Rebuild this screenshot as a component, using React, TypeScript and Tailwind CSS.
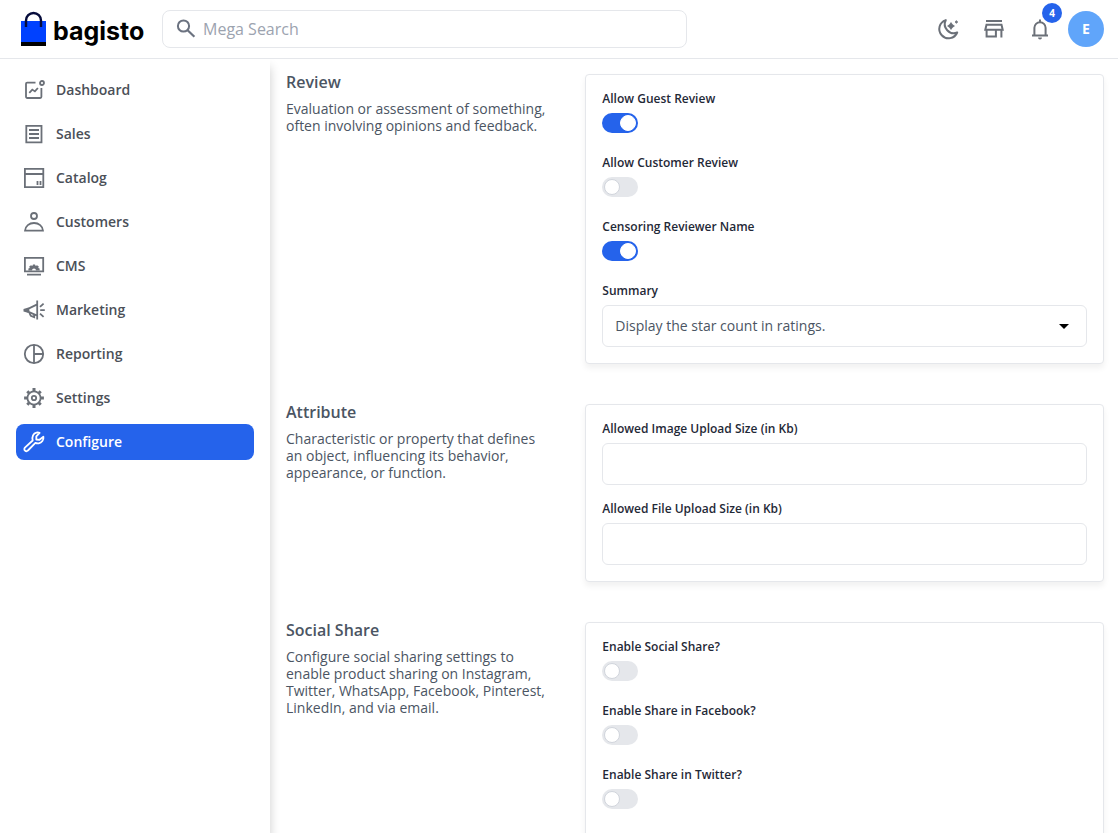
import { FC, ReactNode, useState } from 'react';
import clsx from 'clsx';

interface IconProps {
  children: ReactNode;
}

// 24px outline icon, inherits the text colour
const Icon: FC<IconProps> = ({ children }) => (
  <svg
    className="size-6 shrink-0"
    viewBox="0 0 24 24"
    fill="none"
    stroke="currentColor"
    strokeWidth={1.8}
    aria-hidden="true"
  >
    {children}
  </svg>
);

const DashboardIcon = () => (
  <Icon>
    <path d="M13.5 4.6H5.2A1.2 1.2 0 0 0 4 5.8v13A1.2 1.2 0 0 0 5.2 20h13a1.2 1.2 0 0 0 1.2-1.2V10" />
    <path d="m7.3 14.8 3-3.2 2.6 1.8 3-3.4" />
    <circle cx="20" cy="5" r="2" />
  </Icon>
);

const SalesIcon = () => (
  <Icon>
    <path d="M4.3 3.8h15.2v16.6H4.3zM7 8h10M7 12h10M7 16h10" />
  </Icon>
);

const CatalogIcon = () => (
  <Icon>
    <path d="M2.9 2.9h18.4v18.3H2.9zM3 8h18M15.5 15v4M18.5 15v4" />
  </Icon>
);

const CustomersIcon = () => (
  <Icon>
    <circle cx="12" cy="6" r="3" />
    <path d="M3 20.7h18c-.3-4.5-4.2-7.7-9-7.7s-8.7 3.2-9 7.7Z" />
  </Icon>
);

const CmsIcon = () => (
  <Icon>
    <path d="M2.9 3.9h18.3v13.5H2.9zM5 20.6h14" />
    <path
      d="M6.4 16.6v-2.2l1.4-.4-.6-1.600 1.800-1.200 1.300.8.700-1.600h2l.7 1.600 1.300-.8 1.800 1.200-.6 1.600 1.400.4v2.200h-3.600a2 2 0 0 0-4 0Z"
      fill="currentColor"
      stroke="none"
    />
  </Icon>
);

const MarketingIcon = () => (
  <Icon>
    <path d="M15.2 2.400v19M15.200 6.400 6.500 10.600v3.200l8.700 3.800" />
    <path d="M6.500 9.600 1.500 11v2.600l5 1.400z" fill="currentColor" stroke="none" />
    <path d="m7.400 14.800 1.400 3 3.400 1.400v-2.600M18 8.800l3.600-3.200M18.200 12.200h4.600M18 15.600l3.600 3.200" />
  </Icon>
);

const ReportingIcon = () => (
  <Icon>
    <circle cx="12" cy="12" r="9.2" />
    <path d="M12 2.800v18.400M12 12h9.200" />
  </Icon>
);

const SettingsIcon = () => (
  <Icon>
    <circle cx="12" cy="12" r="6.6" />
    <path
      d="M12 2.100v3.200M12 18.700v3.200M2.100 12h3.200M18.700 12h3.200M5.300 5.300l1.900 1.900M16.800 16.800l1.900 1.900M18.700 5.300l-1.900 1.900M7.200 16.800l-1.900 1.900"
      strokeWidth={3}
    />
    <circle cx="12" cy="12" r="2.200" />
  </Icon>
);

const WrenchIcon = () => (
  <Icon>
    <path
      d="m17.600 2.900-3.300 3.400v3.200l3.200.3 3.900-3c.5 3.200-1.700 6-4.600 6.500-1.200.2-2.400 0-3.400-.4l-7.500 7.600a2 2 0 0 1-3-2.800l7.800-7.200C9.700 6.500 11.300 3.200 14.500 2.600c1.100-.2 2.200-.1 3.100.3Z"
      strokeLinejoin="round"
    />
  </Icon>
);

const MoonIcon = () => (
  <Icon>
    <path
      d="M9.800 3.100a9.300 9.300 0 1 0 11.400 12.400A9 9 0 0 1 9.800 3.100Z"
      strokeWidth={2}
      strokeLinejoin="round"
    />
    <path
      d="m15 5.600 1.400 2L18.400 9l-2 1.400-1.400 2-1.400-2-2-1.400 2-1.400zM20.400 3.600l.4 1 1 .4-1 .4-.4 1-.4-1-1-.4 1-.4z"
      fill="currentColor"
      strokeWidth={0.8}
    />
  </Icon>
);

const StoreIcon = () => (
  <Icon>
    <path d="M4 4h16M4.500 7.800h15l1.200 5H3.300zM4.600 12.800v6.800h9.300v-6.800M19.400 12.800v7.600" strokeWidth={2} />
  </Icon>
);

const BellIcon = () => (
  <Icon>
    <path d="M4 18.600h16M6.400 18.500v-7.700a5.600 5.600 0 0 1 11.200 0v7.700M12 5V2.600" strokeWidth={2} />
    <path d="M10 20.500h4a2 2 0 0 1-4 0Z" fill="currentColor" stroke="none" />
  </Icon>
);

const SearchIcon = () => (
  <Icon>
    <circle cx="9.5" cy="9" r="5.6" strokeWidth={2} />
    <path d="m13.600 13.200 6.800 6.600" strokeWidth={2.2} />
  </Icon>
);

const menu = [
  { label: 'Dashboard', icon: DashboardIcon },
  { label: 'Sales', icon: SalesIcon },
  { label: 'Catalog', icon: CatalogIcon },
  { label: 'Customers', icon: CustomersIcon },
  { label: 'CMS', icon: CmsIcon },
  { label: 'Marketing', icon: MarketingIcon },
  { label: 'Reporting', icon: ReportingIcon },
  { label: 'Settings', icon: SettingsIcon },
  { label: 'Configure', icon: WrenchIcon, active: true },
];

const Header: FC = () => (
  <header className="z-20 flex shrink-0 items-center justify-between border-b border-gray-200 bg-white py-2.5 pr-3.5 pl-5">
    <div className="flex items-center">
      <a href="#" className="flex w-[142px] items-center gap-1.5" aria-label="bagisto home">
        <svg className="h-9 w-[27px]" viewBox="0 0 27 36" aria-hidden="true">
          <path d="M1 10h25v21H1z" fill="#0041ff" />
          <path d="M1 31h25v4H1z" />
          <path d="M6 16V9.5a7.5 7.5 0 0 1 15 0V16" fill="none" stroke="#060c3b" strokeWidth={2.4} />
        </svg>
        <span className="pt-1 font-[Inter] text-[25px] leading-8 font-bold text-black">bagisto</span>
      </a>
      <form className="relative flex w-[525px] items-center" role="search">
        <span className="absolute left-3 text-[#6b7280]">
          <SearchIcon />
        </span>
        <input
          type="text"
          aria-label="Mega Search"
          placeholder="Mega Search"
          className="h-[38px] w-full rounded-lg border border-gray-200 bg-white pr-3 pl-10 text-base text-[#4b5563] placeholder:text-[#9ca3af]"
        />
      </form>
    </div>
    <div className="flex items-center gap-[22px] text-[#6b7078]">
      <button type="button" aria-label="Toggle dark mode">
        <MoonIcon />
      </button>
      <a href="#" aria-label="Visit shop">
        <StoreIcon />
      </a>
      <button type="button" className="relative" aria-label="Notifications">
        <BellIcon />
        <span className="absolute -top-3.5 left-3.5 flex size-5 items-center justify-center rounded-full bg-[#2563eb] text-[10px] font-bold text-white">
          4
        </span>
      </button>
      <button
        type="button"
        className="-ml-1.5 flex size-9 items-center justify-center rounded-full bg-[#60a5fa] text-sm font-bold text-white"
      >
        E
      </button>
    </div>
  </header>
);

const Sidebar: FC = () => (
  <aside className="z-10 w-[270px] shrink-0 bg-white px-4 pt-[13px] shadow-[0px_8px_10px_0px_rgba(0,0,0,0.2)]">
    <nav className="grid gap-2">
      {menu.map(({ label, icon: ItemIcon, active }) => (
        <a
          key={label}
          href="#"
          className={clsx(
            'flex items-center gap-2.5 rounded-lg p-1.5 text-sm font-semibold',
            active ? 'bg-[#2563eb] text-white' : 'text-[#4b5058]'
          )}
        >
          <span className={active ? 'text-white' : 'text-[#6b7078]'}>
            <ItemIcon />
          </span>
          {label}
        </a>
      ))}
    </nav>
  </aside>
);

interface SectionProps {
  title: string;
  info: string;
  children: ReactNode;
}

const Section: FC<SectionProps> = ({ title, info, children }) => (
  <section className="grid grid-cols-[1fr_2fr] gap-10">
    <div>
      <h2 className="text-base leading-4 font-semibold text-[#4b5563]">{title}</h2>
      <p className="mt-2.5 -mr-1 text-sm leading-[17px] text-[#4b5563]">{info}</p>
    </div>
    <div className="grid content-start gap-4 rounded border border-gray-200 bg-white p-4 shadow-[0px_4px_6px_0px_rgba(0,0,0,0.06)]">
      {children}
    </div>
  </section>
);

interface FieldProps {
  id: string;
  label: string;
}

const FieldLabel: FC<FieldProps> = ({ id, label }) => (
  <label htmlFor={id} className="mb-1.5 block text-xs leading-4 font-semibold text-[#1f2937]">
    {label}
  </label>
);

const Toggle: FC<FieldProps & { on?: boolean }> = ({ id, label, on = false }) => {
  const [checked, setChecked] = useState(on);

  return (
    <div className="pb-1.5">
      <FieldLabel id={id} label={label} />
      <input
        id={id}
        type="checkbox"
        role="switch"
        checked={checked}
        onChange={e => setChecked(e.target.checked)}
        className="relative block h-5 w-9 cursor-pointer appearance-none rounded-full bg-gray-200 before:absolute before:top-0.5 before:left-0.5 before:size-4 before:rounded-full before:border before:border-gray-300 before:bg-white checked:bg-[#2563eb] checked:before:translate-x-4 checked:before:border-white"
      />
    </div>
  );
};

const TextField: FC<FieldProps> = ({ id, label }) => (
  <div>
    <FieldLabel id={id} label={label} />
    <input
      id={id}
      type="text"
      className="block h-[42px] w-full rounded-md border border-gray-200 px-3 text-sm text-[#4b5563]"
    />
  </div>
);

export default function App() {
  return (
    <div className="flex h-screen flex-col bg-white font-['Open_Sans','Noto_Sans',sans-serif]">
      <Header />
      <div className="flex min-h-0 flex-1">
        <Sidebar />
        <main className="grid min-w-0 flex-1 content-start gap-10 overflow-y-auto pt-[15px] pr-3.5 pb-10 pl-4 [scrollbar-width:none]">
          <Section
            title="Review"
            info="Evaluation or assessment of something, often involving opinions and feedback."
          >
            <Toggle id="guest-review" label="Allow Guest Review" on />
            <Toggle id="customer-review" label="Allow Customer Review" />
            <Toggle id="censoring" label="Censoring Reviewer Name" on />
            <div>
              <FieldLabel id="summary" label="Summary" />
              <div className="relative">
                <select
                  id="summary"
                  className="block h-[42px] w-full appearance-none rounded-md border border-gray-200 bg-white px-3 text-sm text-[#4b5563]"
                >
                  <option>Display the star count in ratings.</option>
                </select>
                <svg
                  className="pointer-events-none absolute top-[19px] right-[18px] h-[5px] w-2.5"
                  viewBox="0 0 10 5"
                  aria-hidden="true"
                >
                  <path d="M0 0h10L5 5z" />
                </svg>
              </div>
            </div>
          </Section>

          <Section
            title="Attribute"
            info="Characteristic or property that defines an object, influencing its behavior, appearance, or function."
          >
            <TextField id="image-size" label="Allowed Image Upload Size (in Kb)" />
            <TextField id="file-size" label="Allowed File Upload Size (in Kb)" />
          </Section>

          <Section
            title="Social Share"
            info="Configure social sharing settings to enable product sharing on Instagram, Twitter, WhatsApp, Facebook, Pinterest, LinkedIn, and via email."
          >
            <Toggle id="social-share" label="Enable Social Share?" />
            <Toggle id="facebook" label="Enable Share in Facebook?" />
            <Toggle id="twitter" label="Enable Share in Twitter?" />
            <Toggle id="pinterest" label="Enable Share in Pinterest?" />
          </Section>
        </main>
      </div>
    </div>
  );
}
